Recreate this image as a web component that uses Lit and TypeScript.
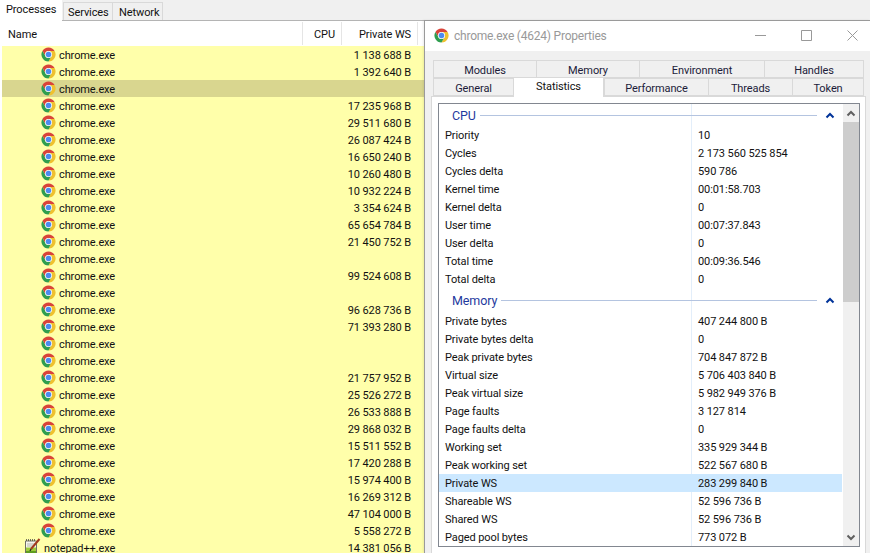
import { LitElement, html, css, svg } from "lit";
import { customElement } from "lit/decorators.js";

const chromeIcon = html`<svg class="ico" viewBox="0 0 16 16">
  <path fill="#d9443a" d="M1.5 4.25A7.5 7.5 0 0 1 14.5 4.25L8 4.25A3.75 3.75 0 0 0 4.75 9.9Z" />
  <path fill="#efc12f" transform="rotate(120 8 8)" d="M1.5 4.25A7.5 7.5 0 0 1 14.5 4.25L8 4.25A3.75 3.75 0 0 0 4.75 9.9Z" />
  <path fill="#2f9e4f" transform="rotate(240 8 8)" d="M1.5 4.25A7.5 7.5 0 0 1 14.5 4.25L8 4.25A3.75 3.75 0 0 0 4.75 9.9Z" />
  <circle cx="8" cy="8" r="3.75" fill="#f4f4f4" />
  <circle cx="8" cy="8" r="2.9" fill="#4c8bf0" />
</svg>`;

const notepadIcon = html`<svg class="ico note" viewBox="0 0 16 16">
  <path fill="#f6f6ef" stroke="#6f6f64" stroke-width="1" d="M.5 2.500h11v13h-11z" />
  <path stroke="#444" stroke-width="1.500" stroke-dasharray="1 1" d="M1 1.500h10" />
  <path stroke="#b5b5aa" stroke-width="1" d="M2 5.500h8M2 7.500h6" />
  <path fill="#9ccb3b" d="M1 9h10v6.500H1z" />
  <path fill="#5f9e1f" d="M1 12.500h10v3H1z" />
  <path stroke="#a33a1e" stroke-width="2" d="M6 10.500L14.500 .5" />
  <path stroke="#222" stroke-width="1.200" d="M5 12.500L6 10.500" />
</svg>`;

const chevron = (up: boolean, color: string) => svg`<svg class="chev" viewBox="0 0 10 7">
  <path fill="none" stroke=${color} stroke-width="2" d=${up ? "M1.500 5.500L5 2l3.500 3.500" : "M1.500 1.500L5 5l3.500-3.500"} />
</svg>`;

const PROCS: [string, string][] = [
  ["chrome.exe", "1 138 688 B"],
  ["chrome.exe", "1 392 640 B"],
  ["chrome.exe", ""],
  ["chrome.exe", "17 235 968 B"],
  ["chrome.exe", "29 511 680 B"],
  ["chrome.exe", "26 087 424 B"],
  ["chrome.exe", "16 650 240 B"],
  ["chrome.exe", "10 260 480 B"],
  ["chrome.exe", "10 932 224 B"],
  ["chrome.exe", "3 354 624 B"],
  ["chrome.exe", "65 654 784 B"],
  ["chrome.exe", "21 450 752 B"],
  ["chrome.exe", ""],
  ["chrome.exe", "99 524 608 B"],
  ["chrome.exe", ""],
  ["chrome.exe", "96 628 736 B"],
  ["chrome.exe", "71 393 280 B"],
  ["chrome.exe", ""],
  ["chrome.exe", ""],
  ["chrome.exe", "21 757 952 B"],
  ["chrome.exe", "25 526 272 B"],
  ["chrome.exe", "26 533 888 B"],
  ["chrome.exe", "29 868 032 B"],
  ["chrome.exe", "15 511 552 B"],
  ["chrome.exe", "17 420 288 B"],
  ["chrome.exe", "15 974 400 B"],
  ["chrome.exe", "16 269 312 B"],
  ["chrome.exe", "47 104 000 B"],
  ["chrome.exe", "5 558 272 B"],
  ["notepad++.exe", "14 381 056 B"],
];

const CPU_STATS = [
  ["Priority", "10"],
  ["Cycles", "2 173 560 525 854"],
  ["Cycles delta", "590 786"],
  ["Kernel time", "00:01:58.703"],
  ["Kernel delta", "0"],
  ["User time", "00:07:37.843"],
  ["User delta", "0"],
  ["Total time", "00:09:36.546"],
  ["Total delta", "0"],
];

const MEM_STATS = [
  ["Private bytes", "407 244 800 B"],
  ["Private bytes delta", "0"],
  ["Peak private bytes", "704 847 872 B"],
  ["Virtual size", "5 706 403 840 B"],
  ["Peak virtual size", "5 982 949 376 B"],
  ["Page faults", "3 127 814"],
  ["Page faults delta", "0"],
  ["Working set", "335 929 344 B"],
  ["Peak working set", "522 567 680 B"],
  ["Private WS", "283 299 840 B"],
  ["Shareable WS", "52 596 736 B"],
  ["Shared WS", "52 596 736 B"],
  ["Paged pool bytes", "773 072 B"],
];

@customElement("app-root")
export class AppRoot extends LitElement {
  static styles = css`
    :host {
      display: block;
      position: relative;
      width: 870px;
      height: 553px;
      overflow: hidden;
      background: #fff;
      font-family: Roboto, "Liberation Sans", sans-serif;
      font-size: 11px;
      letter-spacing: -0.1px;
      color: #111;
    }

    .tabs {
      display: flex;
      height: 20px;
      background: #f0f0f0;
      border-bottom: 1px solid #b4b4b4;
      box-sizing: content-box;
    }
    .tab {
      margin-top: 2px;
      padding: 0 6px;
      line-height: 19px;
      border: 1px solid #d9d9d9;
      border-bottom: none;
      margin-left: -1px;
    }
    .tab.on {
      margin: 0;
      width: 62px;
      padding: 0 0 0 6px;
      box-sizing: border-box;
      height: 21px;
      background: #fff;
      border: none;
      line-height: 20px;
      z-index: 1;
    }
    .tab.services {
      margin-left: 1px;
      width: 38px;
      padding-left: 4px;
    }
    .tab.network {
      width: 37px;
    }

    .head {
      display: flex;
      height: 25px;
      line-height: 25px;
    }
    .head > div {
      border-right: 1px solid #e5e5e5;
      box-sizing: border-box;
      margin: 1px 0;
    }
    .c-name {
      width: 303px;
      padding-left: 8px;
    }
    .c-cpu {
      width: 39px;
      padding-right: 6px;
      text-align: right;
    }
    .c-ws {
      width: 76px;
      padding-right: 6px;
      text-align: right;
    }

    .row {
      display: flex;
      height: 17px;
      margin-left: 2px;
      width: 422px;
      background: #ffffaa;
      align-items: center;
    }
    .row.sel {
      background: #d9d68f;
    }
    .row .name {
      display: flex;
      align-items: center;
      gap: 3px;
      width: 340px;
      padding-left: 39px;
      box-sizing: border-box;
    }
    .row .name span,
    .row .val {
      height: 17px;
      line-height: 19px;
    }
    .row.top .name {
      padding-left: 23px;
    }
    .row .val {
      width: 69px;
      text-align: right;
      white-space: nowrap;
    }
    .ico {
      width: 15px;
      height: 15px;
      flex: none;
    }
    .ico.note {
      width: 16px;
      height: 17px;
      margin-bottom: 2px;
    }

    .win {
      position: absolute;
      left: 424px;
      top: 20px;
      width: 446px;
      height: 533px;
      box-sizing: border-box;
      background: #f0f0f0;
      border: 1px solid #9a9a9a;
      border-right: none;
      border-bottom: none;
      display: flex;
      flex-direction: column;
      box-shadow: -1px 0 2px rgba(0, 0, 0, 0.08);
    }
    .title {
      height: 30px;
      box-sizing: border-box;
      background: #fff;
      display: flex;
      align-items: center;
      padding: 0 12px 1px 9px;
      gap: 5px;
      color: #999;
      font-size: 12px;
      letter-spacing: -0.22px;
      flex: none;
    }
    .title .txt {
      flex: 1;
    }
    .winbtn {
      width: 11px;
      display: flex;
      flex: none;
    }
    .winbtn svg {
      width: 11px;
      height: 11px;
    }
    .btns {
      display: flex;
      gap: 35px;
    }

    .tabrows {
      margin: 9px 5px 0 8px;
      flex: none;
    }
    .trow {
      display: flex;
      height: 18px;
      line-height: 19px;
      color: #1c1c3a;
    }
    .t {
      box-sizing: border-box;
      border: 1px solid #d9d9d9;
      border-right: none;
      text-align: center;
      background: #f0f0f0;
    }
    .t:last-child {
      border-right: 1px solid #d9d9d9;
    }
    .t.on {
      background: #fff;
      border: 1px solid #d9d9d9;
      border-bottom: none;
      height: 20px;
      margin-top: -1px;
      line-height: 17px;
      color: #111;
      position: relative;
      z-index: 1;
    }
    .panel {
      flex: 1;
      margin: 0 4px 0 6px;
      background: #fff;
      border: 1px solid #d9d9d9;
      border-bottom: none;
      padding: 6px 5px 0 6px;
      display: flex;
      min-height: 0;
    }
    .list {
      width: 422px;
      height: 444px;
      box-sizing: border-box;
      border: 1px solid #828790;
      display: flex;
      overflow: hidden;
    }
    .items {
      width: 403px;
      flex: none;
      background: linear-gradient(#e3eefa, #e3eefa) 252px 0 / 1px 100% no-repeat;
    }
    .group {
      display: flex;
      align-items: center;
      height: 22px;
      padding-left: 13px;
      color: #1f3a9e;
      font-size: 12.500px;
      gap: 4px;
    }
    .group.mem {
      height: 24px;
    }
    .group .line {
      flex: 1;
      height: 1px;
      background: #b4c4e0;
    }
    .group .end {
      width: 25px;
      margin-left: -4px;
      display: flex;
      justify-content: center;
    }
    .chev {
      width: 10px;
      height: 7px;
    }
    .stat {
      display: grid;
      grid-template-columns: 253px 1fr;
      height: 18px;
      line-height: 20px;
    }
    .stat > div {
      padding-left: 6px;
      height: 18px;
    }
    .stat.hl {
      background: #cce8ff;
    }
    .scroll {
      width: 16px;
      margin-left: 1px;
      background: #f0f0f0;
      display: flex;
      flex-direction: column;
      align-items: center;
    }
    .arrow {
      height: 18px;
      display: flex;
      align-items: center;
      justify-content: center;
      flex: none;
    }
    .thumb {
      width: 100%;
      height: 180px;
      background: #cdcdcd;
      flex: none;
    }
    .gap {
      flex: 1;
    }
  `;

  private renderStat(s: string[]) {
    return html`<div class="stat ${s[0] === "Private WS" ? "hl" : ""}">
      <div>${s[0]}</div>
      <div>${s[1]}</div>
    </div>`;
  }

  render() {
    return html`
      <div class="tabs">
        <div class="tab on">Processes</div>
        <div class="tab services">Services</div>
        <div class="tab network">Network</div>
      </div>
      <div class="head">
        <div class="c-name">Name</div>
        <div class="c-cpu">CPU</div>
        <div class="c-ws">Private WS</div>
      </div>
      ${PROCS.map(
        (p, i) => html`<div class="row ${i === 2 ? "sel" : ""} ${p[0] !== "chrome.exe" ? "top" : ""}">
          <div class="name">${p[0] === "chrome.exe" ? chromeIcon : notepadIcon}<span>${p[0]}</span></div>
          <div class="val">${p[1]}</div>
        </div>`,
      )}

      <div class="win">
        <div class="title">
          ${chromeIcon}
          <span class="txt">chrome.exe (4624) Properties</span>
          <div class="btns">
            <div class="winbtn">
              <svg viewBox="0 0 11 11"><path stroke="#999" d="M0 5.500h11" /></svg>
            </div>
            <div class="winbtn">
              <svg viewBox="0 0 11 11"><path fill="none" stroke="#999" d="M.5 .5h10v10h-10z" /></svg>
            </div>
            <div class="winbtn">
              <svg viewBox="0 0 11 11"><path stroke="#999" d="M.5 .5l10 10M10.500 .5l-10 10" /></svg>
            </div>
          </div>
        </div>
        <div class="tabrows">
          <div class="trow">
            ${[["Modules", 103], ["Memory", 103], ["Environment", 125], ["Handles", 100]].map(
              (t) => html`<div class="t" style="width:${t[1]}px">${t[0]}</div>`,
            )}
          </div>
          <div class="trow">
            ${[["General", 80], ["Statistics", 91], ["Performance", 104], ["Threads", 84], ["Token", 72]].map(
              (t) => html`<div class="t ${t[0] === "Statistics" ? "on" : ""}" style="width:${t[1]}px">${t[0]}</div>`,
            )}
          </div>
        </div>
        <div class="panel">
          <div class="list">
            <div class="items">
              <div class="group cpu">
                <span>CPU</span><span class="line"></span>
                <span class="end">${chevron(true, "#003399")}</span>
              </div>
              ${CPU_STATS.map((s) => this.renderStat(s))}
              <div class="group mem">
                <span>Memory</span><span class="line"></span>
                <span class="end">${chevron(true, "#003399")}</span>
              </div>
              ${MEM_STATS.map((s) => this.renderStat(s))}
            </div>
            <div class="scroll">
              <div class="arrow">${chevron(true, "#606060")}</div>
              <div class="thumb"></div>
              <div class="gap"></div>
              <div class="arrow">${chevron(false, "#606060")}</div>
            </div>
          </div>
        </div>
      </div>
    `;
  }
}
